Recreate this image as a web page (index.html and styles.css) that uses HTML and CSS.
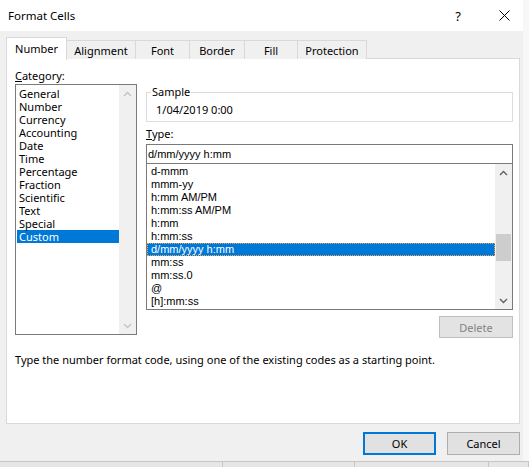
FILE: index.html
```html
<!DOCTYPE html>
<html lang="en">
<head>
    <meta charset="UTF-8">
    <title>Format Cells</title>
    <link rel="stylesheet" href="styles.css">
</head>
<body>
    <div class="window">
        <div class="titlebar">
            <span class="title">Format Cells</span>
            <span class="help">?</span>
            <svg class="close" width="11" height="11" viewBox="0 0 11 11">
                <path d="M0.5 0.5 L10.5 10.5 M10.5 0.5 L0.5 10.5" stroke="#000" stroke-width="1" fill="none"/>
            </svg>
        </div>

        <div class="tabs">
            <div class="tab active">Number</div>
            <div class="tab tab-alignment">Alignment</div>
            <div class="tab tab-font">Font</div>
            <div class="tab tab-border">Border</div>
            <div class="tab tab-fill">Fill</div>
            <div class="tab tab-protection">Protection</div>
        </div>

        <div class="panel">
            <div class="panel-body">
                <div class="category">
                    <div class="label"><u>C</u>ategory:</div>
                    <div class="listbox cat-list">
                        <ul class="items">
                            <li>General</li>
                            <li>Number</li>
                            <li>Currency</li>
                            <li>Accounting</li>
                            <li>Date</li>
                            <li>Time</li>
                            <li>Percentage</li>
                            <li>Fraction</li>
                            <li>Scientific</li>
                            <li>Text</li>
                            <li>Special</li>
                            <li class="selected">Custom</li>
                        </ul>
                        <div class="scrollbar disabled">
                            <div class="arrow">
                                <svg width="9" height="6" viewBox="0 0 9 6"><path d="M1 5 L4.5 1.5 L8 5" stroke="currentColor" stroke-width="1.4" fill="none"/></svg>
                            </div>
                            <div class="track"></div>
                            <div class="arrow">
                                <svg width="9" height="6" viewBox="0 0 9 6"><path d="M1 1 L4.5 4.5 L8 1" stroke="currentColor" stroke-width="1.4" fill="none"/></svg>
                            </div>
                        </div>
                    </div>
                </div>

                <div class="details">
                    <fieldset class="sample">
                        <legend>Sample</legend>
                        <div class="sample-value">1/04/2019 0:00</div>
                    </fieldset>
                    <div class="label type-label"><u>T</u>ype:</div>
                    <div class="type-input">d/mm/yyyy h:mm</div>
                    <div class="listbox format-list">
                        <ul class="items">
                            <li>d-mmm</li>
                            <li>mmm-yy</li>
                            <li>h:mm AM/PM</li>
                            <li>h:mm:ss AM/PM</li>
                            <li>h:mm</li>
                            <li>h:mm:ss</li>
                            <li class="selected focused">d/mm/yyyy h:mm</li>
                            <li>mm:ss</li>
                            <li>mm:ss.0</li>
                            <li>@</li>
                            <li>[h]:mm:ss</li>
                        </ul>
                        <div class="scrollbar">
                            <div class="arrow">
                                <svg width="9" height="6" viewBox="0 0 9 6"><path d="M1 5 L4.5 1.5 L8 5" stroke="currentColor" stroke-width="1.4" fill="none"/></svg>
                            </div>
                            <div class="track">
                                <div class="thumb"></div>
                            </div>
                            <div class="arrow">
                                <svg width="9" height="6" viewBox="0 0 9 6"><path d="M1 1 L4.5 4.5 L8 1" stroke="currentColor" stroke-width="1.4" fill="none"/></svg>
                            </div>
                        </div>
                    </div>
                    <div class="delete-row">
                        <button class="btn" disabled>Delete</button>
                    </div>
                </div>
            </div>
            <p class="hint">Type the number format code, using one of the existing codes as a starting point.</p>
        </div>

        <div class="footer">
            <button class="btn default">OK</button>
            <button class="btn">Cancel</button>
        </div>
    </div>

    <div class="statusbar">
        <span class="cell cell-1"></span>
        <span class="cell cell-2"></span>
        <span class="cell cell-3"></span>
        <span class="cell cell-4"></span>
    </div>
</body>
</html>
```

FILE: styles.css
```css
body {
    margin: 0;
    padding: 0;
    width: 529px;
    height: 467px;
    overflow: hidden;
    background-color: #f7f7f7;
    font-family: "Noto Sans", sans-serif;
    font-size: 11px;
    color: #000;
}

ul {
    margin: 0;
    padding: 0;
    list-style: none;
}

.window {
    width: 523px;
    height: 461px;
    background-color: #f0f0f0;
}

/* title bar */
.titlebar {
    height: 31px;
    background-color: #fff;
    display: flex;
    align-items: center;
    padding-left: 8px;
    font-size: 11.5px;
}

.title {
    flex: 1;
}

.help {
    margin-right: 38px;
    font-size: 13px;
}

.close {
    margin-right: 13px;
}

/* tabs */
.tabs {
    display: flex;
    align-items: flex-end;
    height: 22px;
    margin-top: 6px;
    padding-left: 6px;
    position: relative;
    z-index: 1;
}

.tab {
    height: 19px;
    box-sizing: border-box;
    border: 1px solid #d9d9d9;
    border-bottom: none;
    margin-left: -1px;
    display: flex;
    align-items: center;
    justify-content: center;
    background-color: #f0f0f0;
}

.tab.active {
    margin-left: 0;
    margin-bottom: -1px;
    height: 23px;
    width: 61px;
    background-color: #fff;
    padding-bottom: 2px;
}

.tab-alignment { width: 70px; }
.tab-font { width: 55px; }
.tab-border { width: 56px; }
.tab-fill { width: 54px; }
.tab-protection { width: 70px; }

/* main panel */
.panel {
    width: 514px;
    height: 366px;
    box-sizing: border-box;
    margin-left: 6px;
    margin-top: -1px;
    border: 1px solid #d9d9d9;
    background-color: #fff;
    padding: 0 6px 0 8px;
}

.panel-body {
    display: grid;
    grid-template-columns: 122px 367px;
    column-gap: 9px;
}

.label {
    line-height: 13px;
}

.category .label {
    margin-top: 10px;
}

.listbox {
    display: flex;
    box-sizing: border-box;
    border: 1px solid #7a7a7a;
}

.listbox .items {
    flex: 1;
}

.cat-list {
    margin-top: 2px;
    height: 251px;
}

.cat-list .items {
    padding: 2px 0 0 1px;
}

.items li {
    height: 13px;
    line-height: 13px;
    padding-left: 2px;
    white-space: nowrap;
}

.items li.selected {
    background-color: #0078d7;
    color: #fff;
}

.scrollbar {
    width: 17px;
    background-color: #f0f0f0;
    display: flex;
    flex-direction: column;
    color: #606060;
}

.scrollbar.disabled {
    color: #c4c4c4;
}

.scrollbar .arrow {
    height: 17px;
    display: flex;
    align-items: center;
    justify-content: center;
}

.scrollbar .track {
    flex: 1;
    padding-top: 53px;
}

.thumb {
    width: 15px;
    height: 27px;
    margin-left: 1px;
    background-color: #cdcdcd;
}

/* right column */
.sample {
    margin: 26px 0 0 0;
    padding: 0;
    border: 1px solid #dcdcdc;
    height: 37px;
    box-sizing: border-box;
}

.sample legend {
    margin-left: 4px;
    padding: 0 1px;
    line-height: 14px;
}

.sample-value {
    padding: 4px 0 0 9px;
    line-height: 14px;
}

.type-label {
    margin-top: 5px;
}

.type-input {
    margin-top: 4px;
    height: 20px;
    box-sizing: border-box;
    border: 1px solid #7a7a7a;
    line-height: 18px;
    padding-left: 1px;
    font-family: "Liberation Sans", Arial, sans-serif;
    font-size: 11px;
}

.format-list {
    height: 146px;
    border-top: none;
    font-family: "Liberation Sans", Arial, sans-serif;
    font-size: 11px;
}

.format-list .items {
    padding-top: 1px;
}

.format-list .items li {
    padding-left: 4px;
}

.format-list .items li.focused {
    border: 1px dotted #f7a243;
    padding-left: 3px;
    height: 11px;
    line-height: 11px;
}

.delete-row {
    display: flex;
    justify-content: flex-end;
    margin-top: 6px;
}

.btn {
    font-family: "Noto Sans", sans-serif;
    font-size: 11px;
    width: 74px;
    height: 22px;
    padding: 0;
    border: 1px solid #adadad;
    background-color: #e1e1e1;
    color: #000;
}

.btn:disabled {
    border-color: #bfbfbf;
    background-color: #e3e3e3;
    color: #838383;
}

.hint {
    margin: 15px 0 0 0;
    line-height: 14px;
}

/* bottom buttons */
.footer {
    display: flex;
    justify-content: flex-end;
    gap: 11px;
    margin-top: 8px;
    padding-right: 3px;
}

.footer .btn {
    width: 73px;
    height: 23px;
}

.btn.default {
    border: 2px solid #0078d7;
}

/* strip of the sheet below the dialog */
.statusbar {
    height: 6px;
    display: flex;
    background-color: #e6e6e6;
    border-top: 1px solid #c6c6c6;
}

.statusbar .cell {
    border-right: 1px solid #c6c6c6;
}

.cell-1 { width: 222px; }
.cell-2 { width: 131px; }
.cell-3 { width: 133px; }
.cell-4 { flex: 1; border-right: none; }
```
